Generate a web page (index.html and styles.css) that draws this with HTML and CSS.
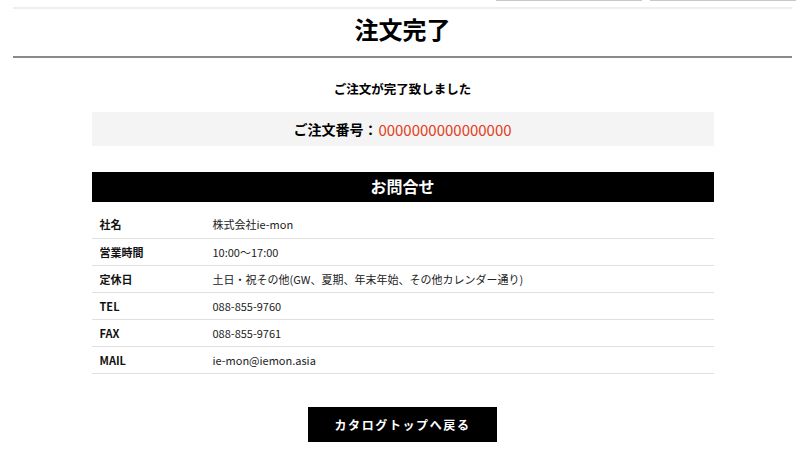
FILE: index.html
```html
<!DOCTYPE html>
<html lang="ja">
<head>
<meta charset="utf-8">
<link rel="stylesheet" href="styles.css">
</head>
<body>
<div class="tabs"><span class="tab"></span><span class="tab"></span></div>
<div class="page">
  <h1 class="title">注文完了</h1>
  <p class="lead">ご注文が完了致しました</p>
  <div class="order">ご注文番号：<span class="order-no">0000000000000000</span></div>
  <h2 class="contact-head">お問合せ</h2>
  <table class="contact">
    <tr><th>社名</th><td>株式会社ie-mon</td></tr>
    <tr><th>営業時間</th><td>10:00～17:00</td></tr>
    <tr><th>定休日</th><td>土日・祝その他(GW、夏期、年末年始、その他カレンダー通り)</td></tr>
    <tr><th>TEL</th><td>088-855-9760</td></tr>
    <tr><th>FAX</th><td>088-855-9761</td></tr>
    <tr><th>MAIL</th><td>ie-mon@iemon.asia</td></tr>
  </table>
  <div class="actions"><a class="btn" href="#">カタログトップへ戻る</a></div>
</div>
</body>
</html>
```
FILE: styles.css
```css
* { box-sizing: border-box; }
html, body { margin: 0; padding: 0; background: #fff; }
body {
  font-family: "Noto Sans CJK JP", "Noto Sans", sans-serif;
  color: #000;
  width: 800px;
  height: 451px;
  overflow: hidden;
}
.tabs {
  display: flex;
  justify-content: flex-end;
  gap: 8px;
  padding-right: 4px;
  height: 7px;
}
.tab {
  width: 146px;
  height: 1px;
  border-bottom: 1px solid #c8c8c8;
}
.page {
  margin: 0 8px 0 13px;
  border-top: 2px solid #eeeeee;
}
.title {
  margin: 0;
  height: 49px;
  padding-top: 2px;
  font-size: 24px;
  line-height: 36px;
  font-weight: bold;
  text-align: center;
  border-bottom: 2px solid #8a8a8a;
}
.lead {
  margin: 21px 0 0;
  font-size: 12.5px;
  line-height: 20px;
  font-weight: bold;
  text-align: center;
}
.order {
  width: 622px;
  margin: 13px auto 0;
  height: 34px;
  background: #f4f4f4;
  display: flex;
  align-items: center;
  justify-content: center;
  font-size: 14px;
  font-weight: bold;
}
.order-no {
  color: #e2401a;
  font-weight: normal;
  font-size: 15px;
  margin-left: 1px;
}
.contact-head {
  width: 622px;
  margin: 26px auto 0;
  height: 30px;
  background: #000;
  color: #fff;
  font-size: 16px;
  line-height: 28px;
  font-weight: bold;
  text-align: center;
}
.contact {
  width: 622px;
  margin: 8px auto 0;
  border-collapse: collapse;
  font-size: 11px;
}
.contact tr { height: 27px; border-bottom: 1px solid #e0e0e0; }
.contact tr:first-child { height: 28px; }
.contact th {
  width: 121px;
  padding: 0 0 0 8px;
  text-align: left;
  font-weight: bold;
  color: #111;
}
.contact td {
  padding: 0;
  color: #222;
}
.actions {
  display: flex;
  justify-content: center;
  margin-top: 33px;
}
.btn {
  display: flex;
  align-items: center;
  justify-content: center;
  width: 189px;
  height: 35px;
  background: #000;
  color: #fff;
  font-size: 12px;
  font-weight: bold;
  letter-spacing: 1.6px;
  text-decoration: none;
}
```
